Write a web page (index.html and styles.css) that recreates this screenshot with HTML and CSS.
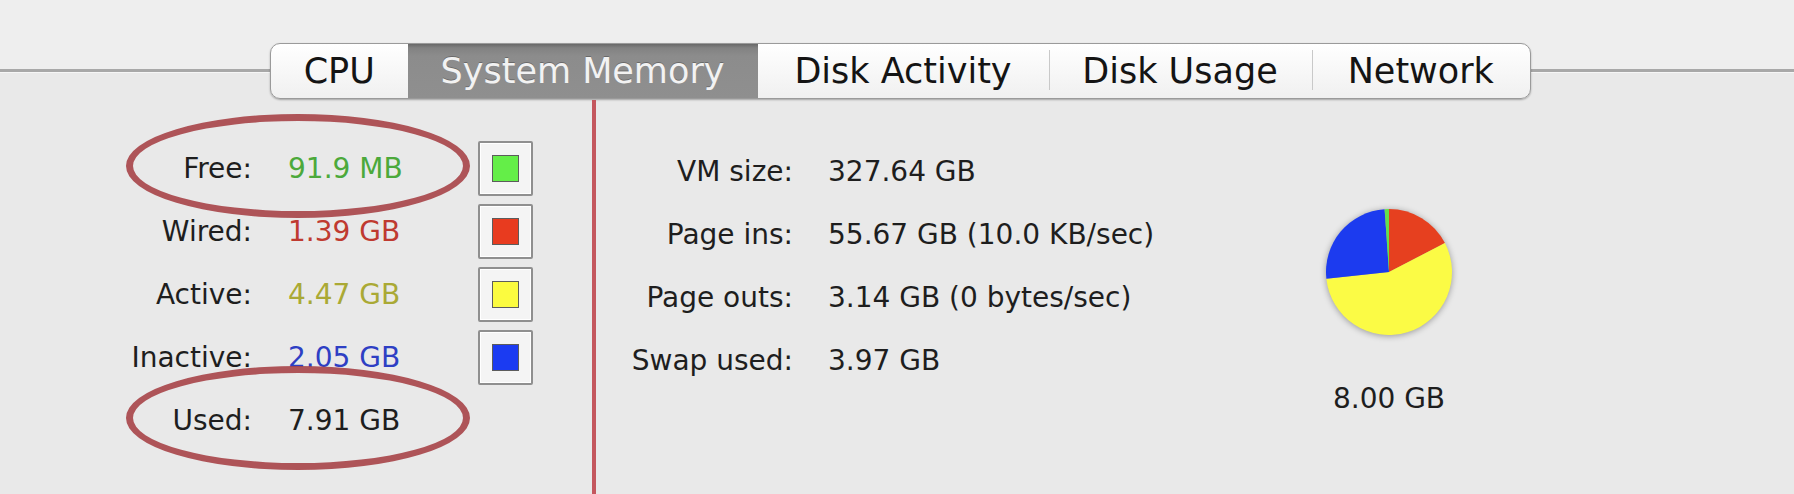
FILE: index.html
```html
<!DOCTYPE html>
<html lang="en">
<head>
<meta charset="utf-8">
<title>Activity Monitor – System Memory</title>
<link rel="stylesheet" href="styles.css">
</head>
<body>
<div class="window">
  <header class="toolbar">
    <nav class="tabs">
      <div class="tab">CPU</div>
      <div class="tab selected">System Memory</div>
      <div class="tab">Disk Activity</div>
      <div class="tab sep">Disk Usage</div>
      <div class="tab sep">Network</div>
    </nav>
  </header>
  <main class="panel">
    <section class="mem-list">
      <div class="row circled">
        <span class="label">Free:</span>
        <span class="value free">91.9 MB</span>
        <span class="swatch-box"><i class="swatch green"></i></span>
      </div>
      <div class="row">
        <span class="label">Wired:</span>
        <span class="value wired">1.39 GB</span>
        <span class="swatch-box"><i class="swatch red"></i></span>
      </div>
      <div class="row">
        <span class="label">Active:</span>
        <span class="value active">4.47 GB</span>
        <span class="swatch-box"><i class="swatch yellow"></i></span>
      </div>
      <div class="row">
        <span class="label">Inactive:</span>
        <span class="value inactive">2.05 GB</span>
        <span class="swatch-box"><i class="swatch blue"></i></span>
      </div>
      <div class="row circled">
        <span class="label">Used:</span>
        <span class="value">7.91 GB</span>
      </div>
    </section>
    <div class="divider"></div>
    <section class="vm-list">
      <div class="vm-row"><span class="label">VM size:</span><span class="value">327.64 GB</span></div>
      <div class="vm-row"><span class="label">Page ins:</span><span class="value">55.67 GB (10.0 KB/sec)</span></div>
      <div class="vm-row"><span class="label">Page outs:</span><span class="value">3.14 GB (0 bytes/sec)</span></div>
      <div class="vm-row"><span class="label">Swap used:</span><span class="value">3.97 GB</span></div>
    </section>
    <section class="chart">
      <svg class="pie" width="140" height="140" viewBox="0 0 140 140" aria-hidden="true">
        <path fill="#e6401f" d="M70,70 L70,7 A63,63 0 0,1 125.93,41.01 Z"/>
        <path fill="#fbfb45" d="M70,70 L125.93,41.01 A63,63 0 1,1 7.37,76.80 Z"/>
        <path fill="#1c3bef" d="M70,70 L7.37,76.80 A63,63 0 0,1 65.61,7.15 Z"/>
        <path fill="#64e04c" d="M70,70 L65.61,7.15 A63,63 0 0,1 70,7 Z"/>
      </svg>
      <div class="total">8.00 GB</div>
    </section>
  </main>
</div>
</body>
</html>
```

FILE: styles.css
```css
html, body {
  margin: 0;
  padding: 0;
}

body {
  width: 1794px;
  height: 494px;
  overflow: hidden;
  background: #e9e9e9;
  font-family: "DejaVu Sans", "Liberation Sans", sans-serif;
  font-size: 28px;
  color: #1e1e1e;
}

.toolbar {
  height: 100px;
  box-sizing: border-box;
  padding-top: 43px;
  padding-left: 270px;
  display: flex;
  align-items: flex-start;
  background: linear-gradient(#eeeeee 0, #eeeeee 69px, #a8a8a8 69px, #a8a8a8 72px, #f6f6f6 72px, #f6f6f6 73px, #e9e9e9 73px);
}

.tabs {
  display: grid;
  grid-template-columns: 136.5px 350px 291px 263px 218.5px;
  height: 56px;
  box-sizing: border-box;
  border: 1.5px solid #9a9a9a;
  border-radius: 10px;
  background: linear-gradient(#ffffff, #f0f0f0);
  box-shadow: 0 1px 2px rgba(0, 0, 0, 0.3);
  overflow: hidden;
}

.tab {
  position: relative;
  display: flex;
  align-items: center;
  justify-content: center;
  font-size: 35px;
  color: #141414;
  white-space: nowrap;
}

.tab.selected {
  background: linear-gradient(#686868 0, #828282 4px, #8c8c8c 12px, #8f8f8f);
  color: #f2f2f2;
  text-shadow: 0 -1px 0 rgba(0, 0, 0, 0.25);
}

.tab.sep::before {
  content: "";
  position: absolute;
  left: 0;
  top: 6px;
  bottom: 8px;
  width: 1px;
  background: #c9c9c9;
}

.panel {
  display: flex;
  height: 394px;
}

.mem-list {
  width: 592px;
  box-sizing: border-box;
  padding-top: 37px;
}

.row {
  position: relative;
  display: grid;
  grid-template-columns: 252px 226px 55px;
  align-items: center;
  height: 63px;
}

.label {
  text-align: right;
  color: #1e1e1e;
  white-space: nowrap;
}

.value {
  padding-left: 36px;
  white-space: nowrap;
}

.value.free { color: #4ca93b; }
.value.wired { color: #bf3a30; }
.value.active { color: #aaa935; }
.value.inactive { color: #2e3fc4; }

.swatch-box {
  width: 55px;
  height: 55px;
  box-sizing: border-box;
  border: 2px solid #8f8f8f;
  border-radius: 2px;
  background: #f4f4f4;
  box-shadow: inset 0 0 0 1px #ffffff;
  display: flex;
  align-items: center;
  justify-content: center;
}

.swatch {
  width: 27px;
  height: 27px;
  box-sizing: border-box;
  border: 1px solid #5c5c5c;
}

.swatch.green { background: #64ee48; }
.swatch.red { background: #e83b1f; }
.swatch.yellow { background: #fbfb3f; }
.swatch.blue { background: #1b3bf2; }

.row.circled::before {
  content: "";
  position: absolute;
  left: 126px;
  top: -23px;
  width: 344px;
  height: 104px;
  box-sizing: border-box;
  border: 7px solid #a8464b;
  border-radius: 50%;
  opacity: 0.92;
}

.divider {
  width: 4px;
  background: #c4575e;
}

.vm-list {
  width: 572px;
  box-sizing: border-box;
  padding-top: 40px;
}

.vm-row {
  display: grid;
  grid-template-columns: 197px 1fr;
  align-items: center;
  height: 63px;
}

.vm-row .value {
  padding-left: 35px;
}

.chart {
  width: 160px;
  margin-left: 141px;
  padding-top: 102px;
  display: flex;
  flex-direction: column;
  align-items: center;
}

.pie {
  display: block;
  filter: drop-shadow(0 1px 3px rgba(0, 0, 0, 0.35));
}

.total {
  margin-top: 40px;
  white-space: nowrap;
}
```
